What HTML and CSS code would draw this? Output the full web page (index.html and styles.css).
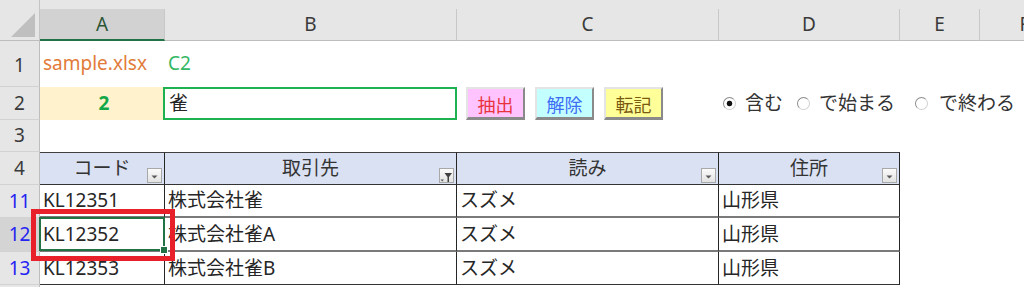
FILE: index.html
```html
<!DOCTYPE html>
<html>
<head>
    <title>sample.xlsx - 抽出</title>
<link rel="stylesheet" href="styles.css">
</head>
<body>

<div class="sheet">

  <!-- column headers -->
  <div class="corner"><span class="tri"></span></div>
  <div class="colhead sel"><span class="lbl">A</span></div>
  <div class="colhead"><span class="lbl">B</span></div>
  <div class="colhead"><span class="lbl">C</span></div>
  <div class="colhead"><span class="lbl">D</span></div>
  <div class="colhead"><span class="lbl">E</span></div>
  <div class="colhead"><span class="lbl">F</span></div>

  <!-- row 1 -->
  <div class="rowhead low">1</div>
  <div class="cell top file">sample.xlsx</div>
  <div class="cell top addr">C2</div>
  <div class="cell rest"></div>

  <!-- row 2 -->
  <div class="rowhead">2</div>
  <div class="cell num">2</div>
  <div class="cell key">雀</div>
  <div class="controls">
    <button class="btn pink">抽出</button>
    <button class="btn cyan">解除</button>
    <button class="btn yellow">転記</button>
    <div class="opts">
      <label class="opt w1"><span class="dot on"></span>含む</label>
      <label class="opt w2"><span class="dot"></span>で始まる</label>
      <label class="opt w3"><span class="dot"></span>で終わる</label>
    </div>
  </div>

  <!-- row 3 -->
  <div class="rowhead">3</div>
  <div class="cell all"></div>

  <!-- row 4 : table header -->
  <div class="rowhead">4</div>
  <div class="th">コード<span class="fb"><svg width="9" height="6" viewBox="0 0 9 6"><polygon points="1.5,1.5 7.5,1.5 4.5,4.5" fill="#595959"/></svg></span></div>
  <div class="th">取引先<span class="fb"><svg width="13" height="12" viewBox="0 0 13 12"><polygon points="4.5,2 12,2 9,6 9,11 7.5,11 7.5,6" fill="#404040"/><polygon points="0.5,8.5 4,8.5 2.25,10.5" fill="#595959"/></svg></span></div>
  <div class="th">読み<span class="fb"><svg width="9" height="6" viewBox="0 0 9 6"><polygon points="1.5,1.5 7.5,1.5 4.5,4.5" fill="#595959"/></svg></span></div>
  <div class="th">住所<span class="fb"><svg width="9" height="6" viewBox="0 0 9 6"><polygon points="1.5,1.5 7.5,1.5 4.5,4.5" fill="#595959"/></svg></span></div>
  <div class="cell side"></div>

  <!-- filtered rows -->
  <div class="rowhead filt">11</div>
  <div class="td">KL12351</div>
  <div class="td">株式会社雀</div>
  <div class="td">スズメ</div>
  <div class="td">山形県</div>
  <div class="cell side"></div>

  <div class="rowhead filt cur">12</div>
  <div class="td act">KL12352</div>
  <div class="td">株式会社雀A</div>
  <div class="td">スズメ</div>
  <div class="td">山形県</div>
  <div class="cell side"></div>

  <div class="rowhead filt">13</div>
  <div class="td last">KL12353</div>
  <div class="td last">株式会社雀B</div>
  <div class="td last">スズメ</div>
  <div class="td last">山形県</div>
  <div class="cell side"></div>

  <div class="rowhead"></div>
  <div class="cell all"></div>

  <!-- red marker over the active cell -->
  <div class="mark"></div>
</div>

</body>
</html>
```

FILE: styles.css
```css
* {
  box-sizing: border-box;
}

body {
  margin: 0;
  background-color: #ffffff;
  font-family: "Noto Sans", "Noto Sans CJK JP", sans-serif;
}

.sheet {
  position: relative;
  width: 1024px;
  height: 287px;
  overflow: hidden;
  display: grid;
  grid-template-columns: 40px 125px 292px 262px 181px 80px 90px;
  grid-template-rows: 41px 46px 33px 32px 33px 33px 34px 33px 20px;
  font-size: 19px;
  line-height: 1;
  color: #262626;
}

/* headers */

.corner {
  background-color: #e6e6e6;
  border-right: 1px solid #c4c4c4;
  border-bottom: 1px solid #bdbdbd;
  display: flex;
  align-items: flex-end;
  justify-content: flex-end;
  padding: 0 4px 3px 0;
}

.tri {
  width: 24px;
  height: 24px;
  background-color: #bfbfbf;
  clip-path: polygon(100% 0, 100% 100%, 0 100%);
}

.colhead {
  background-color: #e6e6e6;
  padding-top: 9px;
  display: flex;
}

.colhead .lbl {
  flex: 1;
  display: flex;
  align-items: center;
  justify-content: center;
  border-right: 1px solid #c8c8c8;
  border-bottom: 1px solid #bdbdbd;
  font-size: 19px;
  color: #3a3a3a;
}

.colhead.sel .lbl {
  background-color: #d2d2d2;
  border-bottom: 2px solid #217346;
  color: #2b5636;
}

.rowhead {
  background-color: #e6e6e6;
  border-right: 1px solid #bdbdbd;
  border-bottom: 1px solid #d2d2d2;
  display: flex;
  align-items: center;
  justify-content: center;
  font-size: 19px;
  color: #3a3a3a;
}

.rowhead.low {
  align-items: flex-end;
  padding-bottom: 11px;
}

.rowhead.filt {
  color: #2424f2;
}

.rowhead.cur {
  background-color: #d4d4d4;
}

/* cells */

.cell {
  display: flex;
  align-items: center;
  padding-left: 3px;
  white-space: nowrap;
}

.cell.top {
  align-items: flex-end;
  padding-bottom: 14px;
}

.file {
  color: #e27b3a;
}

.addr {
  color: #34b865;
}

.rest {
  grid-column: span 4;
}

.all {
  grid-column: span 6;
}

.side {
  grid-column: span 2;
}

.num {
  background-color: #fff2cc;
  justify-content: center;
  font-weight: bold;
  color: #13a74a;
}

.key {
  margin-left: -2px;
  border: 2px solid #1eb150;
  padding-left: 4px;
}

/* buttons and option buttons in row 2 */

.controls {
  grid-column: span 4;
  display: flex;
  padding-left: 9px;
}

.btn {
  width: 59px;
  margin: 0 10px 0 0;
  padding: 0;
  border: 2px solid;
  border-color: #e4e4e4 #8a8a8a #8a8a8a #e4e4e4;
  border-bottom-width: 3px;
  font-family: "Noto Sans CJK JP", sans-serif;
  font-size: 18px;
  line-height: 1;
  padding-top: 2px;
}

.pink {
  background-color: #ffc4ff;
  color: #e8323c;
}

.cyan {
  background-color: #c4ffff;
  color: #3d6cf5;
}

.yellow {
  background-color: #ffff99;
  color: #7a5a10;
}

.opts {
  display: flex;
  align-items: center;
  margin-left: 50px;
}

.opt {
  display: flex;
  align-items: center;
  font-size: 19px;
  color: #333333;
}

.w1 { width: 74px; }
.w2 { width: 118px; }
.w3 { width: 110px; }

.dot {
  width: 13px;
  height: 13px;
  margin-right: 9px;
  border-radius: 50%;
  border: 1px solid;
  border-color: #8a8a8a #d0d0d0 #d0d0d0 #8a8a8a;
  background-color: #ffffff;
}

.w3 .dot {
  margin-right: 11px;
}

.dot.on {
  background: radial-gradient(circle, #111 0, #111 2.4px, #fff 3.2px);
}

/* filtered table */

.th {
  position: relative;
  display: flex;
  align-items: center;
  justify-content: center;
  background-color: #d9e1f2;
  border-top: 1px solid #404040;
  border-bottom: 1px solid #333333;
  border-right: 1px solid #262626;
  color: #333333;
}

.fb {
  position: absolute;
  right: 2px;
  bottom: 1px;
  width: 15px;
  height: 15px;
  display: flex;
  align-items: center;
  justify-content: center;
  border: 1px solid #a8a8a8;
  background: linear-gradient(#fbfbfb, #e2e2e2);
  padding-top: 2px;
}

.td {
  display: flex;
  align-items: center;
  padding-left: 3px;
  border-right: 1px solid #262626;
  border-bottom: 2px solid #7a7a7a;
  white-space: nowrap;
}

.td.last {
  border-bottom: 1px solid #333333;
}

.act {
  position: relative;
}

.act::before {
  content: "";
  position: absolute;
  left: -1px;
  top: -1px;
  right: -1px;
  bottom: -1px;
  border: 2px solid #217346;
}

.act::after {
  content: "";
  position: absolute;
  right: -4px;
  bottom: -4px;
  width: 6px;
  height: 6px;
  background-color: #217346;
  border: 1px solid #ffffff;
}

.mark {
  position: absolute;
  left: 31px;
  top: 209px;
  width: 144px;
  height: 52px;
  border: 5px solid #e8202a;
}
```
